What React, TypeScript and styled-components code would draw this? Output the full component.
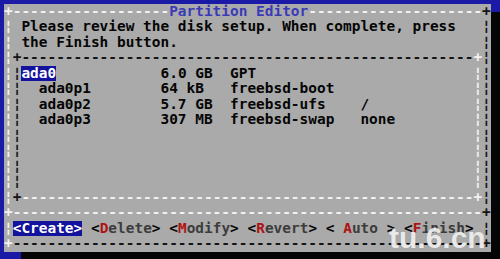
import React from "react";
import styled, { createGlobalStyle } from "styled-components";

type Tone = "light" | "dark" | "title" | "text" | "label" | "key";

const palette: Record<Tone, string> = {
  light: "#f2f2f2",
  dark: "#141414",
  title: "#3a3ab8",
  text: "#050505",
  label: "#3c3c3c",
  key: "#b01212",
};

const GlobalStyle = createGlobalStyle`
  html, body {
    margin: 0;
    padding: 0;
    background: #1a1aa6;
  }
  body {
    width: 500px;
    height: 259px;
    overflow: hidden;
  }
`;

const Screen = styled.div`
  position: relative;
  width: 500px;
  height: 259px;
  box-sizing: border-box;
  padding: 4px 0 0 4px;
  background: #1a1aa6;
  overflow: hidden;
`;

const Dialog = styled.div`
  width: 56ch;
  display: flex;
  flex-direction: column;
  background: #aaaaaa;
  box-shadow: 17px 8px 0 #050505;
  font-family: "DejaVu Sans Mono", "Liberation Mono", monospace;
  font-size: 14.45px;
  font-weight: 700;
  line-height: 15.47px;
  color: ${palette.text};
`;

const Line = styled.div`
  display: flex;
  height: 15.47px;
  white-space: pre;
`;

const Glyph = styled.span<{ $tone: Tone }>`
  color: ${(p) => palette[p.$tone]};
`;

const Field = styled.span<{ $cols: number }>`
  display: block;
  flex: none;
  width: ${(p) => p.$cols}ch;
  white-space: pre;
  overflow: hidden;
`;

const Selected = styled.span`
  background: #12129c;
  color: #ffffff;
`;

const Watermark = styled.div`
  position: absolute;
  left: 389px;
  top: 223px;
  font-family: "Liberation Sans", Arial, sans-serif;
  font-weight: 700;
  font-size: 30px;
  line-height: 30px;
  color: rgba(250, 250, 250, 0.86);
  text-shadow: 0 0 1px rgba(120, 120, 120, 0.5);
  pointer-events: none;
`;

const dash = (n: number) => "-".repeat(n);

const Side = ({ tone }: { tone: Tone }) => <Glyph $tone={tone}>¦</Glyph>;

const FramedRow = ({ children }: { children?: React.ReactNode }) => (
  <Line>
    <Side tone="light" />
    <Field $cols={54}>{children}</Field>
    <Side tone="dark" />
  </Line>
);

const fmt = (size: string, scheme: string, mount: string) =>
  size.padEnd(8) + scheme.padEnd(15) + mount;

const partitions = [
  { name: "  ada0p1", size: "64 kB", scheme: "freebsd-boot", mount: "" },
  { name: "  ada0p2", size: "5.7 GB", scheme: "freebsd-ufs", mount: "/" },
  { name: "  ada0p3", size: "307 MB", scheme: "freebsd-swap", mount: "none" },
];

const ListRow = ({ children }: { children?: React.ReactNode }) => (
  <Line>
    <Side tone="light" />
    <Side tone="dark" />
    <Field $cols={52}>{children}</Field>
    <Side tone="light" />
    <Side tone="dark" />
  </Line>
);

type Btn = { pre: string; key: string; rest: string; selected?: boolean };
const buttons: Btn[] = [
  { pre: "", key: "C", rest: "reate", selected: true },
  { pre: "", key: "D", rest: "elete" },
  { pre: "", key: "M", rest: "odify" },
  { pre: "", key: "R", rest: "evert" },
  { pre: " ", key: "A", rest: "uto " },
  { pre: "", key: "F", rest: "inish" },
];

const Button = ({ b }: { b: Btn }) =>
  b.selected ? (
    <Selected>{`<${b.pre}${b.key}${b.rest}>`}</Selected>
  ) : (
    <span>
      <Glyph $tone="text">{"<" + b.pre}</Glyph>
      <Glyph $tone="key">{b.key}</Glyph>
      <Glyph $tone="label">{b.rest}</Glyph>
      <Glyph $tone="text">{">"}</Glyph>
    </span>
  );

export default function App() {
  return (
    <>
      <GlobalStyle />
      <Screen>
        <Dialog>
          <Line>
            <Glyph $tone="light">{"+" + dash(18)}</Glyph>
            <Glyph $tone="title">Partition Editor</Glyph>
            <Glyph $tone="light">{dash(20)}</Glyph>
            <Glyph $tone="dark">+</Glyph>
          </Line>
          <FramedRow>{" Please review the disk setup. When complete, press"}</FramedRow>
          <FramedRow>{" the Finish button."}</FramedRow>
          <FramedRow>
            <Glyph $tone="dark">{"+" + dash(52)}</Glyph>
            <Glyph $tone="light">+</Glyph>
          </FramedRow>
          <ListRow>
            <Selected>ada0</Selected>
            {"            " + fmt("6.0 GB", "GPT", "")}
          </ListRow>
          {partitions.map((p) => (
            <ListRow key={p.name}>{p.name.padEnd(16) + fmt(p.size, p.scheme, p.mount)}</ListRow>
          ))}
          {[0, 1, 2, 3].map((i) => (
            <ListRow key={i} />
          ))}
          <FramedRow>
            <Glyph $tone="dark">+</Glyph>
            <Glyph $tone="light">{dash(52) + "+"}</Glyph>
          </FramedRow>
          <Line>
            <Glyph $tone="light">{"+" + dash(54)}</Glyph>
            <Glyph $tone="dark">+</Glyph>
          </Line>
          <FramedRow>
            {buttons.map((b, i) => (
              <React.Fragment key={b.key}>
                {i > 0 && " "}
                <Button b={b} />
              </React.Fragment>
            ))}
          </FramedRow>
          <Line>
            <Glyph $tone="light">+</Glyph>
            <Glyph $tone="dark">{dash(54) + "+"}</Glyph>
          </Line>
        </Dialog>
        <Watermark>tu.6.cn</Watermark>
      </Screen>
    </>
  );
}
